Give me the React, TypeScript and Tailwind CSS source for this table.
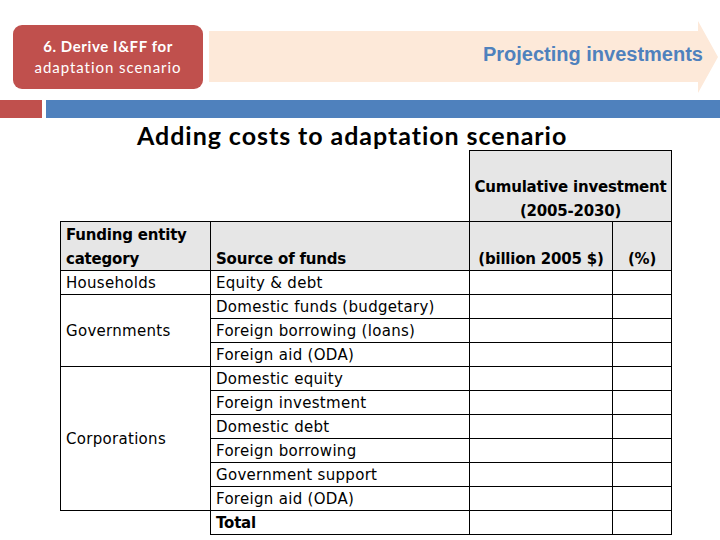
import React from "react";

const sources = [
  "Equity & debt",
  "Domestic funds (budgetary)",
  "Foreign borrowing (loans)",
  "Foreign aid (ODA)",
  "Domestic equity",
  "Foreign investment",
  "Domestic debt",
  "Foreign borrowing",
  "Government support",
  "Foreign aid (ODA)",
];

function Arrow() {
  return (
    <div className="relative ml-[6px] mt-[-4px] flex h-[72px] w-[511px] items-center justify-end pr-[17px]">
      <svg className="absolute inset-0" width="511" height="72" viewBox="0 0 511 72">
        <polygon points="0,10 489,10 489,0 509,36 489,72 489,61 0,61" fill="#fde9d9" />
      </svg>
      <span className="relative mt-[-6px] font-['Liberation_Sans',Arial,sans-serif] text-[20px] font-bold text-[#4f81bd]">
        Projecting investments
      </span>
    </div>
  );
}

export default function App() {
  const cell = "h-[23px] border border-black px-[5px] pt-[2px] pb-0 align-middle leading-[21px]";
  const head = "border border-black py-0 align-bottom leading-[24px]";

  return (
    <div className="relative h-[540px] w-[720px] overflow-hidden bg-white font-['DejaVu_Sans',sans-serif] text-black">
      <div className="flex items-start pl-[13px] pt-[25px]">
        <div className="flex h-[64px] w-[190px] flex-col items-center justify-center rounded-[9px] bg-[#c0504d] font-['Lato',sans-serif] text-[15px] leading-[21px] text-white">
          <span className="font-bold tracking-[0.6px]">6. Derive I&amp;FF for</span>
          <span className="tracking-[0.95px]">adaptation scenario</span>
        </div>
        <Arrow />
      </div>

      <div className="mt-[7px] flex h-[18px] gap-[4px]">
        <div className="w-[42px] bg-[#c0504d]" />
        <div className="flex-1 bg-[#4f81bd]" />
      </div>

      <h1 className="ml-[137px] mt-[2px] h-[30px] font-['Lato',sans-serif] text-[25px] font-bold leading-[30px] tracking-[0.95px]">
        Adding costs to adaptation scenario
      </h1>

      <table className="ml-[60px] table-fixed border-collapse text-[15px] tracking-[0.3px]">
        <colgroup>
          <col className="w-[150px]" />
          <col className="w-[259px]" />
          <col className="w-[143px]" />
          <col className="w-[59px]" />
        </colgroup>
        <tbody>
          <tr className="h-[71px]">
            <td colSpan={2} className="p-0" />
            <th colSpan={2} className={head + " bg-[#e6e6e6] px-0 text-center font-bold tracking-[-0.2px]"}>
              <span className="relative top-[2px]">
                Cumulative investment
                <br />
                (2005-2030)
              </span>
            </th>
          </tr>
          <tr className="h-[47px] bg-[#e6e6e6] font-bold tracking-[-0.2px]">
            <td className={head + " px-[5px]"}>
              <span className="relative top-[1px]">Funding entity category</span>
            </td>
            <td className={head + " px-[5px]"}>
              <span className="relative top-[1px]">Source of funds</span>
            </td>
            <td className={head + " px-0 text-center"}>
              <span className="relative top-[1px]">(billion 2005 $)</span>
            </td>
            <td className={head + " px-0 text-center"}>
              <span className="relative top-[1px]">(%)</span>
            </td>
          </tr>
          {sources.map((s, i) => (
            <tr key={i} className="h-[23px]">
              {i === 0 && <td className={cell}>Households</td>}
              {i === 1 && (
                <td rowSpan={3} className={cell}>
                  Governments
                </td>
              )}
              {i === 4 && (
                <td rowSpan={6} className={cell}>
                  Corporations
                </td>
              )}
              <td className={cell}>{s}</td>
              <td className={cell} />
              <td className={cell} />
            </tr>
          ))}
          <tr className="h-[23px]">
            <td className="p-0" />
            <td className={cell + " font-bold tracking-[-0.2px]"}>Total</td>
            <td className={cell} />
            <td className={cell} />
          </tr>
        </tbody>
      </table>
    </div>
  );
}
